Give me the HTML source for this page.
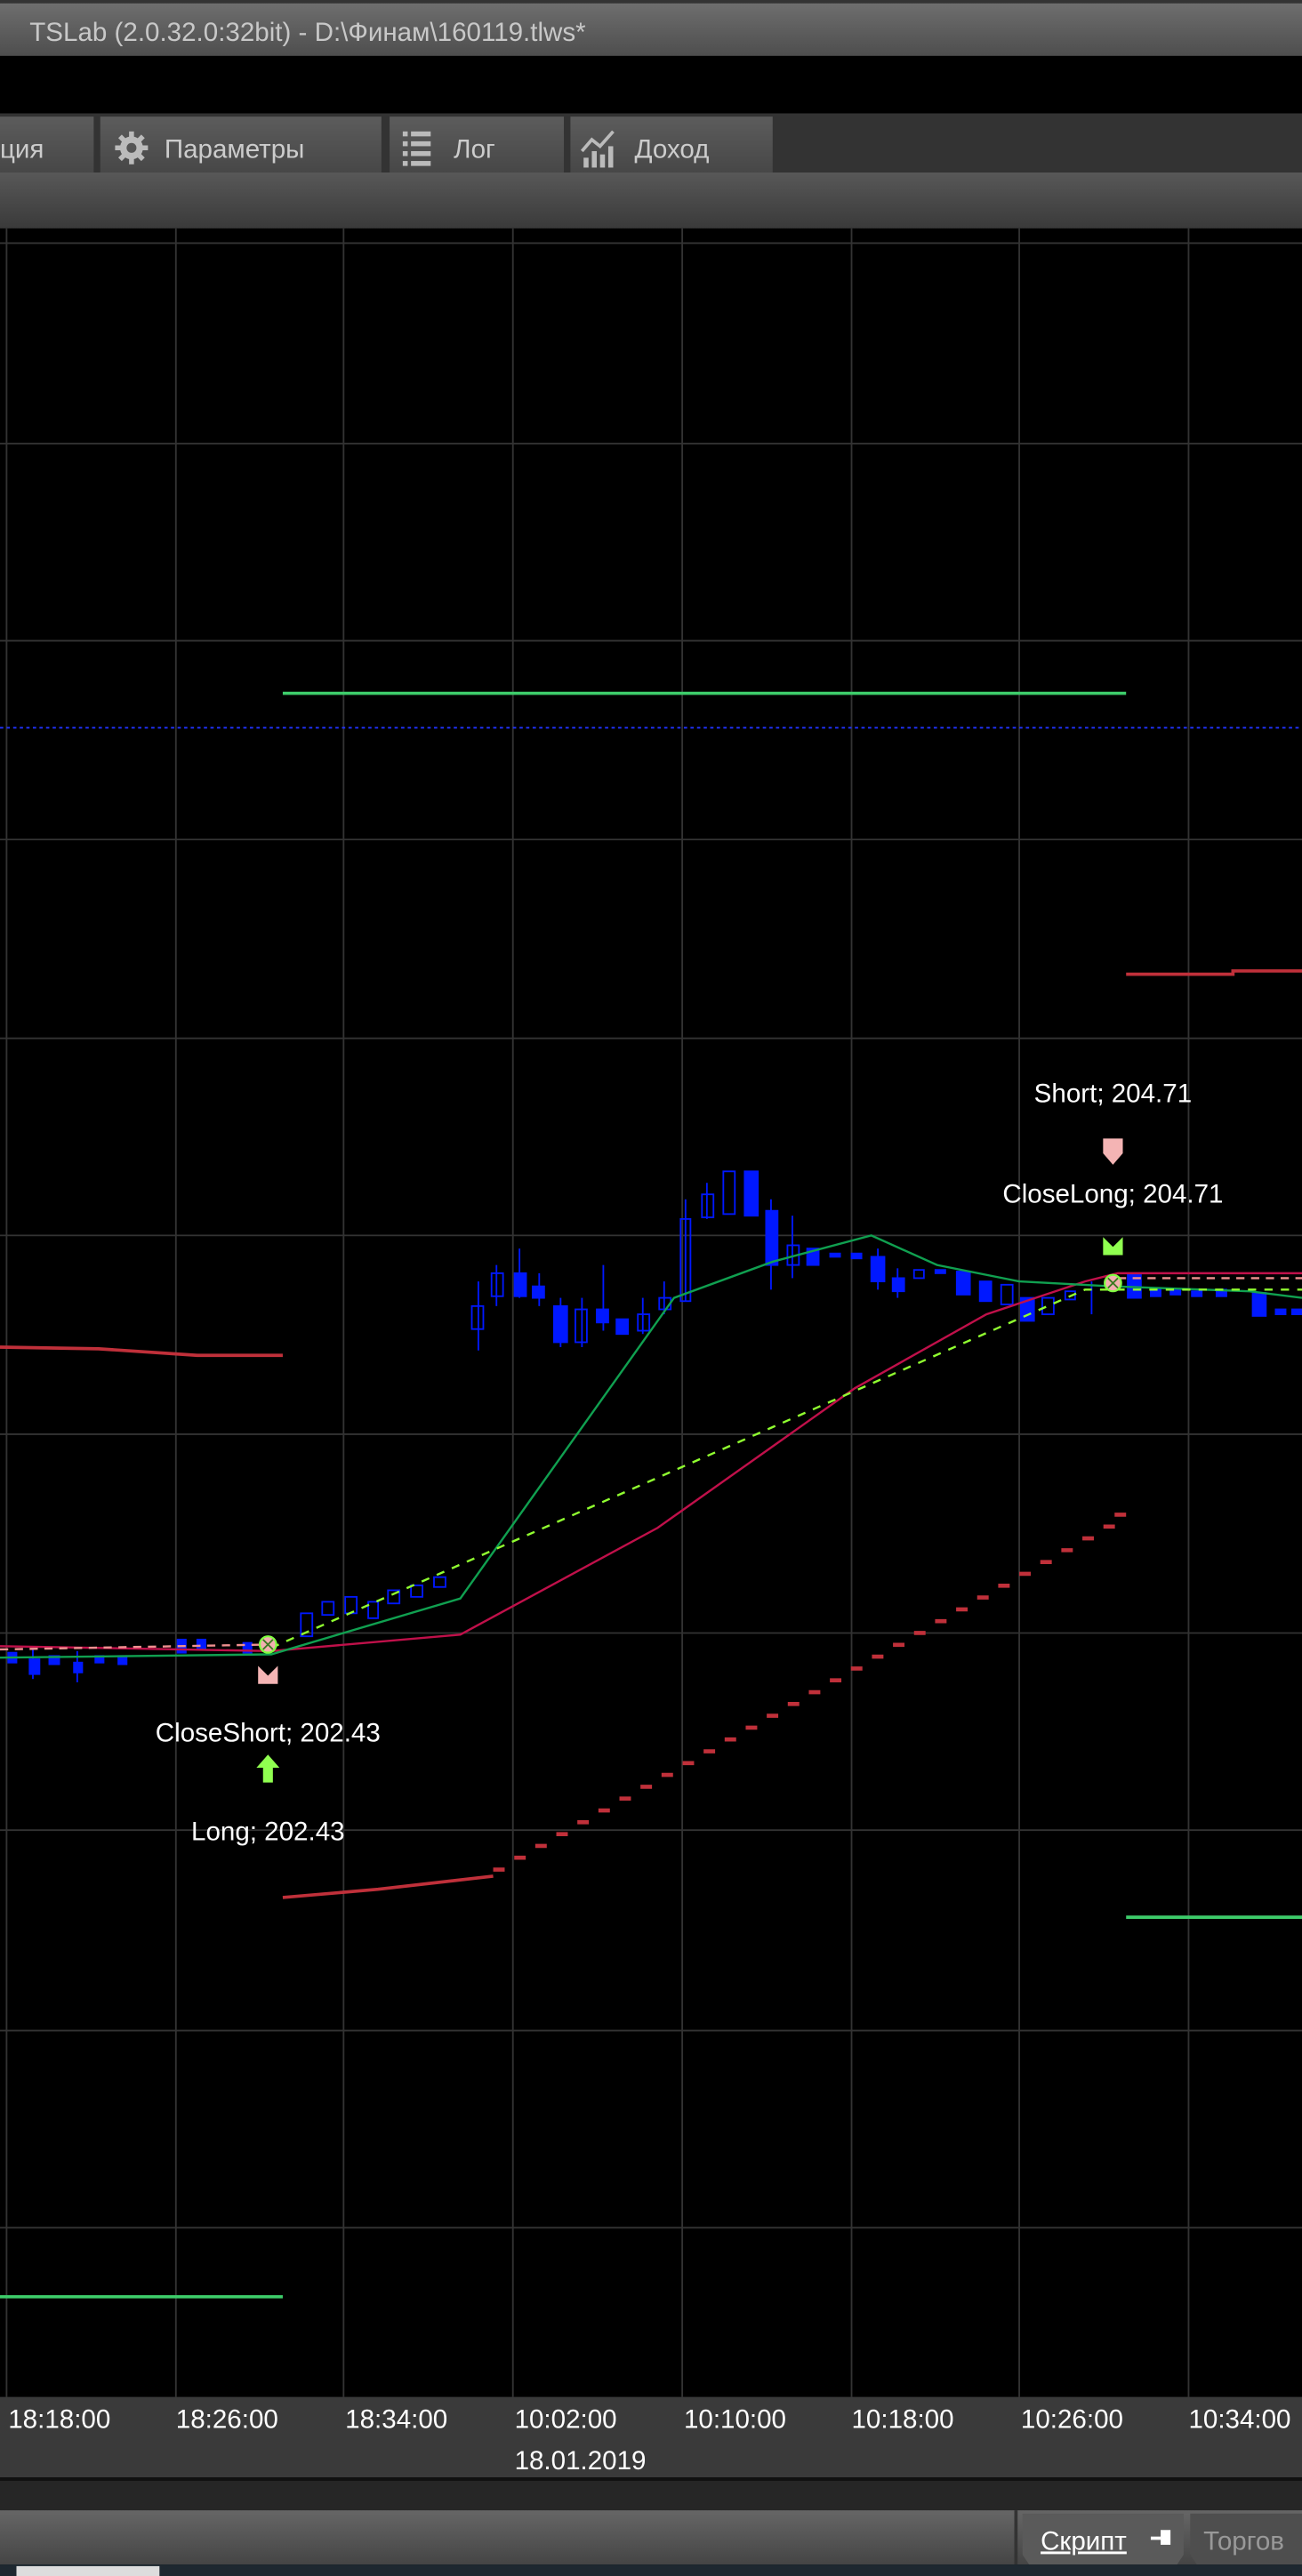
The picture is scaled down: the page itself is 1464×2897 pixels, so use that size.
<!DOCTYPE html>
<html><head><meta charset="utf-8"><style>
html,body{margin:0;padding:0;background:#000;width:1464px;height:2897px;overflow:hidden}
svg{display:block}
text{font-family:"Liberation Sans","Noto Sans CJK SC",sans-serif}
</style></head><body>
<svg width="1464" height="2897" viewBox="0 0 792 1568" preserveAspectRatio="none" xmlns="http://www.w3.org/2000/svg">
<defs>
<linearGradient id="tg" x1="0" y1="0" x2="0" y2="1"><stop offset="0" stop-color="#6e6e6e"/><stop offset="1" stop-color="#4e4e4e"/></linearGradient>
<linearGradient id="tab" x1="0" y1="0" x2="0" y2="1"><stop offset="0" stop-color="#5c5c5c"/><stop offset="1" stop-color="#474747"/></linearGradient>
<linearGradient id="bar" x1="0" y1="0" x2="0" y2="1"><stop offset="0" stop-color="#585858"/><stop offset="1" stop-color="#3a3a3a"/></linearGradient>
<linearGradient id="bb" x1="0" y1="0" x2="0" y2="1"><stop offset="0" stop-color="#666"/><stop offset="1" stop-color="#454545"/></linearGradient>
</defs>
<rect width="792" height="1568" fill="#000"/>
<!-- title -->
<rect x="0" y="0" width="792" height="2" fill="#333"/>
<rect x="0" y="2" width="792" height="32" fill="url(#tg)"/>
<text x="18" y="25" font-size="16" fill="#c8c8c8">TSLab (2.0.32.0:32bit) - D:\Финам\160119.tlws*</text>
<!-- tabs -->
<rect x="0" y="69" width="792" height="36" fill="#333"/>
<rect x="0" y="71" width="57" height="34" fill="url(#tab)"/>
<rect x="61" y="71" width="171" height="34" fill="url(#tab)"/>
<rect x="237" y="71" width="106" height="34" fill="url(#tab)"/>
<rect x="347" y="71" width="123" height="34" fill="url(#tab)"/>
<text x="0" y="96" font-size="16" fill="#ccc">ция</text>
<g fill="#bbb"><circle cx="80" cy="90" r="7"/></g>
<g stroke="#bbb" stroke-width="3"><line x1="80" y1="80" x2="80" y2="100"/><line x1="70" y1="90" x2="90" y2="90"/><line x1="73" y1="83" x2="87" y2="97"/><line x1="87" y1="83" x2="73" y2="97"/></g>
<circle cx="80" cy="90" r="3" fill="#555"/>
<text x="100" y="96" font-size="16" fill="#ccc">Параметры</text>
<g fill="#bbb"><rect x="245" y="80" width="3" height="3"/><rect x="250" y="80" width="12" height="3"/><rect x="245" y="86" width="3" height="3"/><rect x="250" y="86" width="12" height="3"/><rect x="245" y="92" width="3" height="3"/><rect x="250" y="92" width="12" height="3"/><rect x="245" y="98" width="3" height="3"/><rect x="250" y="98" width="12" height="3"/></g>
<text x="276" y="96" font-size="16" fill="#ccc">Лог</text>
<g fill="#bbb"><rect x="355" y="96" width="3" height="6"/><rect x="360" y="92" width="3" height="10"/><rect x="365" y="94" width="3" height="8"/><rect x="370" y="89" width="3" height="13"/></g>
<polyline points="354,92 360,85 365,89 373,80" fill="none" stroke="#bbb" stroke-width="2"/>
<text x="386" y="96" font-size="16" fill="#ccc">Доход</text>
<rect x="0" y="105" width="792" height="34" fill="url(#bar)"/>
<!-- grid -->
<g stroke="#333" stroke-width="1">
<line x1="4" y1="139" x2="4" y2="1459"/><line x1="107" y1="139" x2="107" y2="1459"/><line x1="209" y1="139" x2="209" y2="1459"/><line x1="312" y1="139" x2="312" y2="1459"/><line x1="415" y1="139" x2="415" y2="1459"/><line x1="518" y1="139" x2="518" y2="1459"/><line x1="620" y1="139" x2="620" y2="1459"/><line x1="723" y1="139" x2="723" y2="1459"/>
<line x1="0" y1="148" x2="792" y2="148"/><line x1="0" y1="270" x2="792" y2="270"/><line x1="0" y1="390" x2="792" y2="390"/><line x1="0" y1="511" x2="792" y2="511"/><line x1="0" y1="632" x2="792" y2="632"/><line x1="0" y1="752" x2="792" y2="752"/><line x1="0" y1="873" x2="792" y2="873"/><line x1="0" y1="994" x2="792" y2="994"/><line x1="0" y1="1114" x2="792" y2="1114"/><line x1="0" y1="1236" x2="792" y2="1236"/><line x1="0" y1="1356" x2="792" y2="1356"/>
</g>
<line x1="0" y1="443" x2="792" y2="443" stroke="#2233ff" stroke-width="1" stroke-dasharray="2,2"/>
<!-- levels -->
<line x1="172" y1="422" x2="685" y2="422" stroke="#3dcc6a" stroke-width="2"/>
<line x1="685" y1="1167" x2="792" y2="1167" stroke="#3dcc6a" stroke-width="2"/>
<line x1="0" y1="1398" x2="172" y2="1398" stroke="#3dcc6a" stroke-width="2"/>
<polyline points="685,593 750,593 750,591 792,591" fill="none" stroke="#c0303a" stroke-width="2"/>
<polyline points="0,820 60,821 120,825 172,825" fill="none" stroke="#c0303a" stroke-width="2"/>
<polyline points="172,1155 230,1150 300,1142" fill="none" stroke="#c0303a" stroke-width="2"/>
<path d="M300,1138h7M312.8,1130.8h7M325.6,1123.6h7M338.4,1116.4h7M351.2,1109.2h7M364,1102h7M376.8,1094.8h7M389.6,1087.6h7M402.4,1080.4h7M415.2,1073.2h7M428,1066h7M440.8,1058.8h7M453.6,1051.6h7M466.4,1044.4h7M479.2,1037.2h7M492,1030h7M504.8,1022.8h7M517.6,1015.6h7M530.4,1008.4h7M543.2,1001.2h7M556,994h7M568.8,986.8h7M581.6,979.6h7M594.4,972.4h7M607.2,965.2h7M620,958h7M632.8,950.8h7M645.6,943.6h7M658.4,936.4h7M671.2,929.2h7M678,922h7" stroke="#c0303a" stroke-width="2.5" fill="none"/>
<!-- candles -->
<g fill="#0018ff" stroke="#0018ff" stroke-width="1">
<rect x="5" y="1006" width="5" height="6"/><rect x="18" y="1010" width="6" height="9"/><rect x="30" y="1008" width="6" height="5"/><rect x="45" y="1012" width="5" height="6"/><rect x="58" y="1008" width="5" height="4"/><rect x="72" y="1008" width="5" height="5"/><rect x="108" y="998" width="5" height="8"/><rect x="120" y="998" width="5" height="6"/><rect x="148" y="1000" width="5" height="6"/>
<line x1="47" y1="1005" x2="47" y2="1024"/><line x1="20" y1="1003" x2="20" y2="1022"/>
<line x1="291" y1="780" x2="291" y2="822"/><rect x="287" y="795" width="7" height="14" fill="none"/>
<line x1="302" y1="770" x2="302" y2="795"/><rect x="299" y="775" width="7" height="14" fill="none"/>
<line x1="316" y1="760" x2="316" y2="790"/><rect x="313" y="775" width="7" height="14"/>
<line x1="328" y1="775" x2="328" y2="795"/><rect x="324" y="783" width="7" height="7"/>
<rect x="337" y="795" width="8" height="22"/><line x1="341" y1="790" x2="341" y2="820"/>
<rect x="350" y="797" width="7" height="20" fill="none"/><line x1="354" y1="790" x2="354" y2="820"/>
<rect x="363" y="797" width="7" height="8"/><line x1="367" y1="770" x2="367" y2="810"/>
<rect x="375" y="803" width="7" height="9"/>
<rect x="388" y="800" width="7" height="10" fill="none"/><line x1="391" y1="790" x2="391" y2="812"/>
<rect x="401" y="790" width="7" height="7" fill="none"/><line x1="404" y1="780" x2="404" y2="800"/>
<rect x="414" y="742" width="6" height="50" fill="none"/><line x1="417" y1="730" x2="417" y2="792"/>
<rect x="427" y="727" width="7" height="14" fill="none"/><line x1="430" y1="720" x2="430" y2="742"/>
<rect x="440" y="713" width="7" height="26" fill="none"/>
<rect x="453" y="713" width="8" height="27"/>
<rect x="466" y="737" width="7" height="33"/><line x1="469" y1="730" x2="469" y2="785"/>
<rect x="479" y="758" width="7" height="12" fill="none"/><line x1="482" y1="740" x2="482" y2="778"/>
<rect x="491" y="760" width="7" height="10"/><rect x="505" y="763" width="6" height="2"/><rect x="518" y="763" width="6" height="3"/>
<rect x="530" y="765" width="8" height="15"/><line x1="534" y1="760" x2="534" y2="785"/>
<rect x="543" y="778" width="7" height="8"/><line x1="546" y1="772" x2="546" y2="790"/>
<rect x="556" y="773" width="6" height="5" fill="none"/><rect x="569" y="773" width="6" height="2"/>
<rect x="582" y="774" width="8" height="14"/><rect x="596" y="780" width="7" height="12"/>
<rect x="609" y="782" width="7" height="12" fill="none"/>
<rect x="621" y="790" width="8" height="14"/><rect x="634" y="790" width="7" height="10" fill="none"/>
<rect x="648" y="786" width="6" height="5" fill="none"/><line x1="664" y1="780" x2="664" y2="800"/>
<rect x="686" y="776" width="8" height="14"/>
<rect x="700" y="785" width="6" height="4"/><rect x="712" y="785" width="6" height="3"/><rect x="725" y="786" width="6" height="3"/><rect x="740" y="785" width="6" height="4"/>
<rect x="762" y="787" width="8" height="14"/><rect x="776" y="797" width="6" height="3"/><rect x="786" y="797" width="6" height="3"/>
<rect x="183" y="982" width="7" height="14" fill="none"/><rect x="196" y="975" width="7" height="8" fill="none"/><rect x="210" y="972" width="7" height="10" fill="none"/><rect x="224" y="975" width="6" height="10" fill="none"/><rect x="236" y="968" width="7" height="8" fill="none"/><rect x="250" y="965" width="7" height="7" fill="none"/><rect x="264" y="960" width="7" height="6" fill="none"/>
</g>
<!-- MAs -->
<polyline points="0,1002 165,1005 280,995 400,930 520,845 600,800 660,780 680,775 792,775" fill="none" stroke="#c0104a" stroke-width="1.3"/>
<polyline points="0,1009 165,1007 280,973 410,790 470,768 530,752 570,770 620,780 677,783 760,786 792,790" fill="none" stroke="#10a050" stroke-width="1.3"/>
<polyline points="165,1003 660,785 792,785" fill="none" stroke="#90ff30" stroke-width="1.3" stroke-dasharray="5,5"/>
<polyline points="0,1004 165,1001" fill="none" stroke="#f09090" stroke-width="1.3" stroke-dasharray="5,4"/>
<polyline points="680,778 792,778" fill="none" stroke="#f09090" stroke-width="1.3" stroke-dasharray="5,4"/>
<!-- markers -->
<circle cx="163" cy="1001" r="5" fill="#f3b0b0" stroke="#80ff40" stroke-width="1.2"/>
<path d="M160,998l6,6M166,998l-6,6" stroke="#3a7a20" stroke-width="1"/>
<circle cx="677" cy="781" r="5" fill="#f3b0b0" stroke="#80ff40" stroke-width="1.2"/>
<path d="M674,778l6,6M680,778l-6,6" stroke="#3a7a20" stroke-width="1"/>
<polygon points="157,1014 163,1020 169,1014 169,1025 157,1025" fill="#f4b4b4"/>
<polygon points="163,1068 170,1076 166,1076 166,1085 160,1085 160,1076 156,1076" fill="#90ff50"/>
<polygon points="671,693 683,693 683,702 677,709 671,702" fill="#f4b4b4"/>
<polygon points="671,753 677,759 683,753 683,764 671,764" fill="#90ff50"/>
<g font-size="16" fill="#fff" text-anchor="middle">
<text x="163" y="1060">CloseShort; 202.43</text>
<text x="163" y="1120">Long; 202.43</text>
<text x="677" y="671">Short; 204.71</text>
<text x="677" y="732">CloseLong; 204.71</text>
</g>
<!-- axis -->
<rect x="0" y="1459" width="792" height="49" fill="#3a3a3a"/>
<g font-size="16" fill="#fff">
<text x="5" y="1478">18:18:00</text><text x="107" y="1478">18:26:00</text><text x="210" y="1478">18:34:00</text><text x="313" y="1478">10:02:00</text><text x="416" y="1478">10:10:00</text><text x="518" y="1478">10:18:00</text><text x="621" y="1478">10:26:00</text><text x="723" y="1478">10:34:00</text>
<text x="313" y="1503">18.01.2019</text>
</g>
<rect x="0" y="1508" width="792" height="2" fill="#111"/>
<rect x="0" y="1510" width="792" height="18" fill="#262626"/>
<rect x="0" y="1528" width="792" height="33" fill="url(#bb)"/>
<rect x="617" y="1528" width="2" height="33" fill="#333"/>
<path d="M622,1530 H720 V1555 L716,1561 H626 L622,1555 Z" fill="#5a5a5a"/>
<path d="M724,1530 H792 V1561 H728 L724,1555 Z" fill="#4e4e4e"/>
<text x="633" y="1552" font-size="16" fill="#fff" text-decoration="underline">Скрипт</text>
<g fill="#fff"><rect x="700" y="1544" width="6" height="2"/><rect x="706" y="1540" width="6" height="9"/></g>
<text x="732" y="1552" font-size="16" fill="#999">Торгов</text>
<rect x="0" y="1561" width="792" height="7" fill="#1e2830"/>
<rect x="10" y="1562" width="87" height="6" fill="#ddd"/>
</svg>
</body></html>
